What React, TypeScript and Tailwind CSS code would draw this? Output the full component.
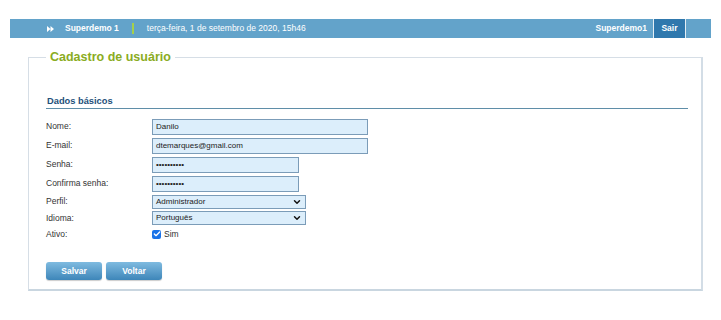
import { Check, ChevronDown } from "lucide-react";

const font = { fontFamily: '"Liberation Sans", Arial, sans-serif' };

function Row({ label, children, h = 19 }: { label: string; children: React.ReactNode; h?: number }) {
  return (
    <div className="flex items-center" style={{ height: h }}>
      <span className="w-[106px] text-[8.5px] text-[#333]">{label}</span>
      {children}
    </div>
  );
}

function Field({ value, width }: { value: string; width: string }) {
  return (
    <div className={`${width} h-[16px] border border-[#7b9cb8] bg-[#dceefb] px-[3px] text-[8px] leading-[14px] text-[#222]`}>
      {value}
    </div>
  );
}

function Select({ value }: { value: string }) {
  return (
    <div className="flex h-[14px] w-[154px] items-center justify-between border border-[#7b9cb8] bg-[#dceefb] pl-[3px] pr-[3px] text-[8px] text-[#222]">
      <span>{value}</span>
      <ChevronDown size={10} strokeWidth={3.5} className="text-[#111]" />
    </div>
  );
}

export default function App() {
  return (
    <div className="min-h-[320px] bg-white pt-[19px]" style={font}>
      <div className="mx-[10px] flex h-[19px] items-center bg-[#63a3ca] text-[8.5px] text-white">
        <svg className="ml-[37px]" width="7" height="6" viewBox="0 0 7 6">
          <path d="M0 0 L3.5 3 L0 6 Z M3.5 0 L7 3 L3.5 6 Z" fill="white" />
        </svg>
        <span className="ml-[11px] font-bold">Superdemo 1</span>
        <span className="ml-[13px] h-[11px] w-[2px] bg-[#a6d04a]" />
        <span className="ml-[13px]">terça-feira, 1 de setembro de 2020, 15h46</span>
        <span className="ml-auto pr-[6px] font-bold">Superdemo1</span>
        <span className="flex h-full w-[32px] items-center justify-center border-l border-[#e4eef5] bg-[#2f78ad] font-bold">Sair</span>
        <span className="h-full w-[26px] border-l border-[#e4eef5]" />
      </div>

      <fieldset className="ml-[28px] mt-[12px] w-[675px] border border-[#d6dee6] border-b-2 border-r-2 border-b-[#c9d6e0] border-r-[#d3dde6] pb-[9px] pl-[17px] pr-[13px]">
        <legend className="ml-0 px-[4px] text-[12.5px] leading-[15px] font-bold text-[#8aac22]">Cadastro de usuário</legend>
        <div className="mt-[31px] border-b border-[#5f8ea8] pb-[1px] pl-[1px] text-[9.3px] leading-[11px] font-bold text-[#24507a]">Dados básicos</div>
        <div className="mt-[8px]">
          <Row label="Nome:">
            <Field value="Danilo" width="w-[216px]" />
          </Row>
          <Row label="E-mail:">
            <Field value="dtemarques@gmail.com" width="w-[216px]" />
          </Row>
          <Row label="Senha:">
            <Field value="••••••••••" width="w-[147px]" />
          </Row>
          <Row label="Confirma senha:">
            <Field value="••••••••••" width="w-[147px]" />
          </Row>
          <Row label="Perfil:" h={17}>
            <Select value="Administrador" />
          </Row>
          <Row label="Idioma:" h={16}>
            <Select value="Português" />
          </Row>
          <Row label="Ativo:" h={16}>
            <span className="flex h-[9px] w-[9px] items-center justify-center rounded-[2px] bg-[#1a73e8]">
              <Check size={8} strokeWidth={4} className="text-white" />
            </span>
            <span className="ml-[3px] text-[8.5px] text-[#333]">Sim</span>
          </Row>
        </div>
        <div className="mt-[20px] flex gap-[4px]">
          <button className="h-[18px] w-[56px] rounded-[3px] bg-gradient-to-b from-[#7fbbe0] to-[#3d86b9] text-[8.5px] font-bold text-white shadow-[0_1px_1px_rgba(0,0,0,0.2)]">Salvar</button>
          <button className="h-[18px] w-[56px] rounded-[3px] bg-gradient-to-b from-[#7fbbe0] to-[#3d86b9] text-[8.5px] font-bold text-white shadow-[0_1px_1px_rgba(0,0,0,0.2)]">Voltar</button>
        </div>
      </fieldset>
    </div>
  );
}
